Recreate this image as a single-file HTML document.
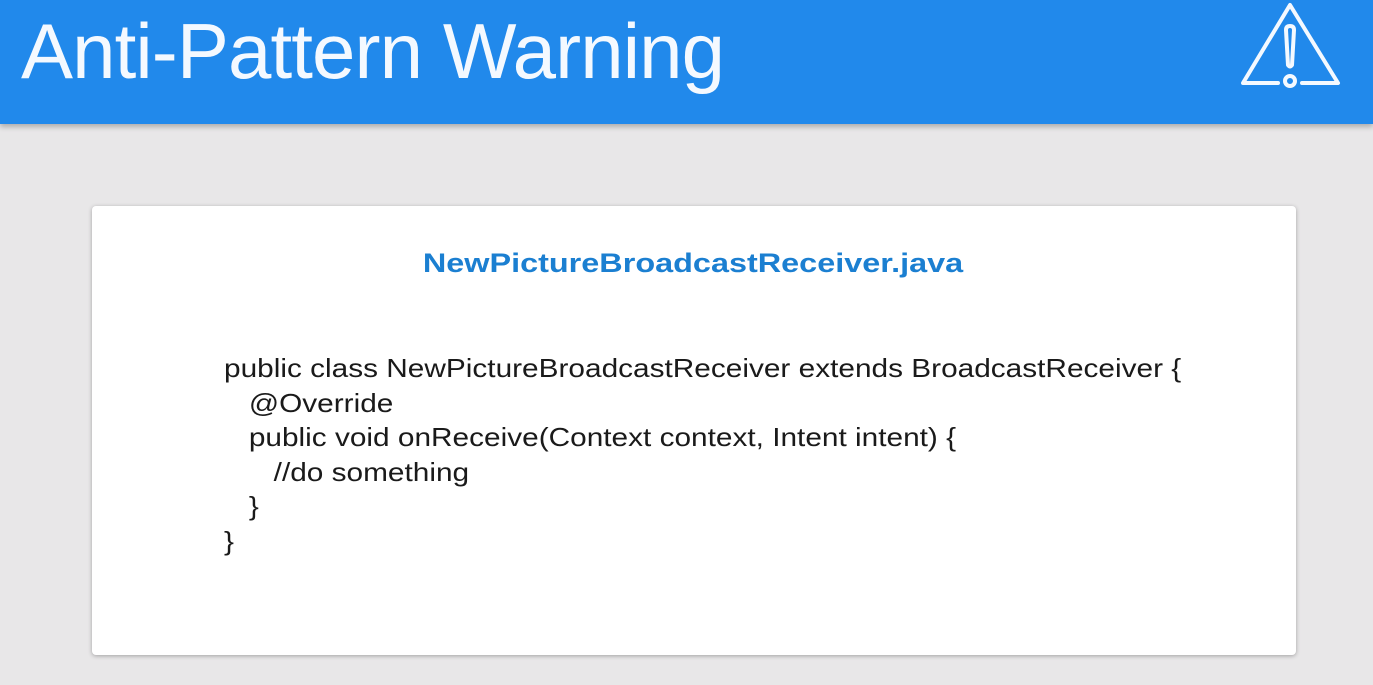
<!DOCTYPE html>
<html><head><meta charset="utf-8"><style>
html,body{margin:0;padding:0}
body{width:1373px;height:685px;background:#e8e7e8;position:relative;overflow:hidden;font-family:"Liberation Sans",sans-serif}
.hdr{position:absolute;left:0;top:0;width:1373px;height:124px;background:#2189eb;box-shadow:0 3px 5px rgba(0,0,0,.25)}
.title{position:absolute;left:21px;top:6px;font-size:78px;color:#f4f9ff;white-space:nowrap;letter-spacing:-0.9px}
.card{position:absolute;left:92px;top:206px;width:1204px;height:449px;background:#fff;border-radius:4px;box-shadow:0 1px 4px rgba(0,0,0,.3)}
.fn{position:absolute;left:693px;top:248px;font-weight:bold;font-size:27px;color:#1b7fd1;white-space:nowrap;transform:translateX(-50%) scaleX(1.2)}
.code{position:absolute;left:224px;top:351px;font-size:26px;line-height:34.5px;color:#1a1a1a;white-space:pre;transform-origin:left top;transform:scaleX(1.146)}
</style></head><body>
<div class="hdr">
<div class="title">Anti-Pattern Warning</div>
<svg style="position:absolute;left:1230px;top:0" width="130" height="100" viewBox="1230 0 130 100">
<g fill="none" stroke="#f4f9ff" stroke-width="4" stroke-linecap="round" stroke-linejoin="round">
<path d="M1278 83 H1243 L1290 5 L1338 83 H1302"/>
<path d="M1286 30 Q1286 26 1290 26 Q1294 26 1294 30 L1292 65 Q1290 68 1288 65 Z"/>
<circle cx="1290" cy="81" r="5"/>
</g></svg>
</div>
<div class="card"></div>
<div class="fn">NewPictureBroadcastReceiver.java</div>
<div class="code">public class NewPictureBroadcastReceiver extends BroadcastReceiver {
   @Override
   public void onReceive(Context context, Intent intent) {
      //do something
   }
}</div>
</body></html>
